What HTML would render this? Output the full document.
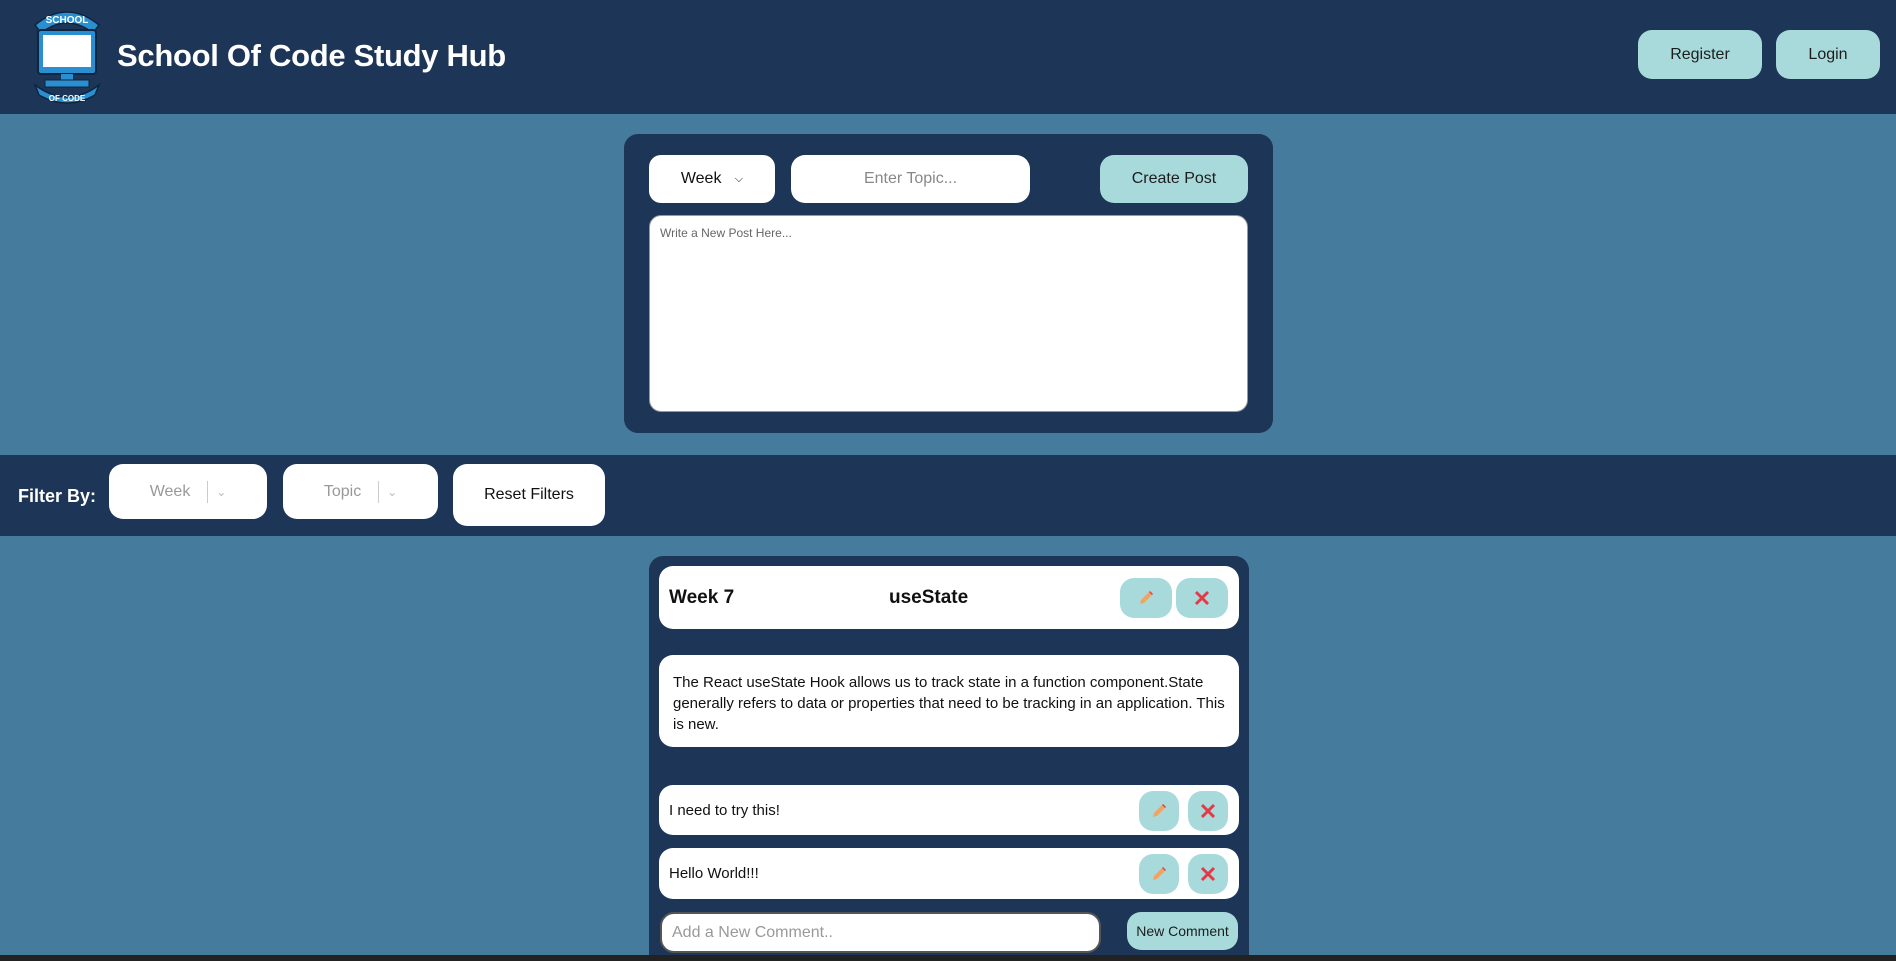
<!DOCTYPE html>
<html style="overflow:hidden;height:961px"><head><meta charset="utf-8">
<style>
*{box-sizing:border-box;margin:0;padding:0}
body{width:1896px;height:961px;overflow:hidden;background:#457b9d;font-family:"Liberation Sans",sans-serif;position:relative}
.a{position:absolute}
.hdr{left:0;top:0;width:1896px;height:114px;background:#1d3557}
.title{left:117px;top:38px;color:#fff;font-size:31px;font-weight:bold;letter-spacing:-0.3px}
.btn{background:#a8dadc;border-radius:14px;display:flex;align-items:center;justify-content:center;color:#1d1d1d;font-size:16px}
.box{left:624px;top:134px;width:649px;height:299px;background:#1d3557;border-radius:14px}
.w{background:#fff;border-radius:14px}
.filter{left:0;top:455px;width:1896px;height:81px;background:#1d3557}
.card{left:649px;top:556px;width:600px;height:405px;background:#1d3557;border-radius:14px 14px 0 0}
.c{display:flex;align-items:center;color:#111}
.ib{background:#a8dadc;border-radius:14px;display:flex;align-items:center;justify-content:center}
</style></head><body>
<div class="a hdr"></div>
<svg class="a" style="left:27px;top:5px" width="80" height="100" viewBox="0 0 80 100">
<path d="M8 20 Q40 -6 72 20 L66 28 Q40 8 14 28Z" fill="#2a8fd0" stroke="#0d2540" stroke-width="1.5"/>
<text x="40" y="18" fill="#fff" font-size="10" font-weight="bold" text-anchor="middle" font-family="Liberation Sans">SCHOOL</text>
<rect x="11" y="25" width="58" height="44" rx="3" fill="#2a8fd0" stroke="#0d2540" stroke-width="2"/>
<rect x="16" y="30" width="48" height="32" fill="#fff"/>
<rect x="34" y="69" width="12" height="6" fill="#2a8fd0"/>
<rect x="18" y="75" width="44" height="7" fill="#2a8fd0" stroke="#0d2540"/>
<path d="M8 80 Q40 104 72 80 L68 90 Q40 106 12 90Z" fill="#2a8fd0" stroke="#0d2540" stroke-width="1.5"/>
<text x="40" y="96" fill="#fff" font-size="8" font-weight="bold" text-anchor="middle" font-family="Liberation Sans">OF CODE</text>
</svg>
<div class="a title">School Of Code Study Hub</div>
<div class="a btn" style="left:1638px;top:30px;width:124px;height:49px">Register</div>
<div class="a btn" style="left:1776px;top:30px;width:104px;height:49px">Login</div>

<div class="a box"></div>
<div class="a w c" style="left:649px;top:155px;width:126px;height:48px;border-radius:12px;justify-content:center;font-size:16px">Week&nbsp;&nbsp;&nbsp;<span style="font-size:11px">&#9013;</span></div>
<div class="a w c" style="left:791px;top:155px;width:239px;height:48px;justify-content:center;color:#888;font-size:16px">Enter Topic...</div>
<div class="a btn" style="left:1100px;top:155px;width:148px;height:48px">Create Post</div>
<div class="a w" style="left:649px;top:215px;width:599px;height:197px;border-radius:12px;border:1px solid #999;padding:10px 10px;font-size:12px;color:#666">Write a New Post Here...</div>

<div class="a filter"></div>
<div class="a" style="left:18px;top:486px;color:#fff;font-weight:bold;font-size:18px">Filter By:</div>
<div class="a w c" style="left:109px;top:464px;width:158px;height:55px;justify-content:center;color:#999;font-size:16px">Week&nbsp;&nbsp;<span style="border-left:1px solid #ccc;height:22px;margin:0 8px"></span><span style="font-size:12px;color:#bbb">&#8964;</span></div>
<div class="a w c" style="left:283px;top:464px;width:155px;height:55px;justify-content:center;color:#999;font-size:16px">Topic&nbsp;&nbsp;<span style="border-left:1px solid #ccc;height:22px;margin:0 8px"></span><span style="font-size:12px;color:#bbb">&#8964;</span></div>
<div class="a w c" style="left:453px;top:464px;width:152px;height:62px;justify-content:center;font-size:16px">Reset Filters</div>

<div class="a card"></div>
<div class="a w c" style="left:659px;top:566px;width:580px;height:63px;font-weight:bold;font-size:19px">
<span style="position:absolute;left:10px">Week 7</span><span style="position:absolute;left:230px">useState</span></div>
<div class="a w" style="left:659px;top:655px;width:580px;height:92px;padding:17px 14px;font-size:15px;line-height:21px;color:#111">The React useState Hook allows us to track state in a function component.State generally refers to data or properties that need to be tracking in an application. This is new.</div>
<div class="a w c" style="left:659px;top:785px;width:580px;height:50px;padding-left:10px;font-size:15px">I need to try this!</div>
<div class="a w c" style="left:659px;top:848px;width:580px;height:51px;padding-left:10px;font-size:15px">Hello World!!!</div>
<div class="a w c" style="left:660px;top:912px;width:441px;height:41px;border:2px solid #555;padding-left:10px;color:#999;font-size:16px">Add a New Comment..</div>
<div class="a btn" style="left:1127px;top:912px;width:111px;height:38px;font-size:14px">New Comment</div>
<div class="a" style="left:0;top:955px;width:1896px;height:6px;background:#222"></div>

<div class="a ib" style="left:1120px;top:578px;width:52px;height:40px"><svg width="18" height="18" viewBox="0 0 18 18"><path d="M3 15 L4 11 L12 3 L15 6 L7 14Z" fill="#f4a261"/><path d="M12 3 L15 6 L16 5 L13 2Z" fill="#e63946"/></svg></div>
<div class="a ib" style="left:1176px;top:578px;width:52px;height:40px"><svg width="18" height="18"><path d="M3 3 L15 15 M15 3 L3 15" stroke="#e63946" stroke-width="3"/></svg></div>
<div class="a ib" style="left:1139px;top:791px;width:40px;height:40px"><svg width="18" height="18" viewBox="0 0 18 18"><path d="M3 15 L4 11 L12 3 L15 6 L7 14Z" fill="#f4a261"/><path d="M12 3 L15 6 L16 5 L13 2Z" fill="#e63946"/></svg></div>
<div class="a ib" style="left:1188px;top:791px;width:40px;height:40px"><svg width="18" height="18"><path d="M3 3 L15 15 M15 3 L3 15" stroke="#e63946" stroke-width="3"/></svg></div>
<div class="a ib" style="left:1139px;top:854px;width:40px;height:40px"><svg width="18" height="18" viewBox="0 0 18 18"><path d="M3 15 L4 11 L12 3 L15 6 L7 14Z" fill="#f4a261"/><path d="M12 3 L15 6 L16 5 L13 2Z" fill="#e63946"/></svg></div>
<div class="a ib" style="left:1188px;top:854px;width:40px;height:40px"><svg width="18" height="18"><path d="M3 3 L15 15 M15 3 L3 15" stroke="#e63946" stroke-width="3"/></svg></div>
</body></html>
